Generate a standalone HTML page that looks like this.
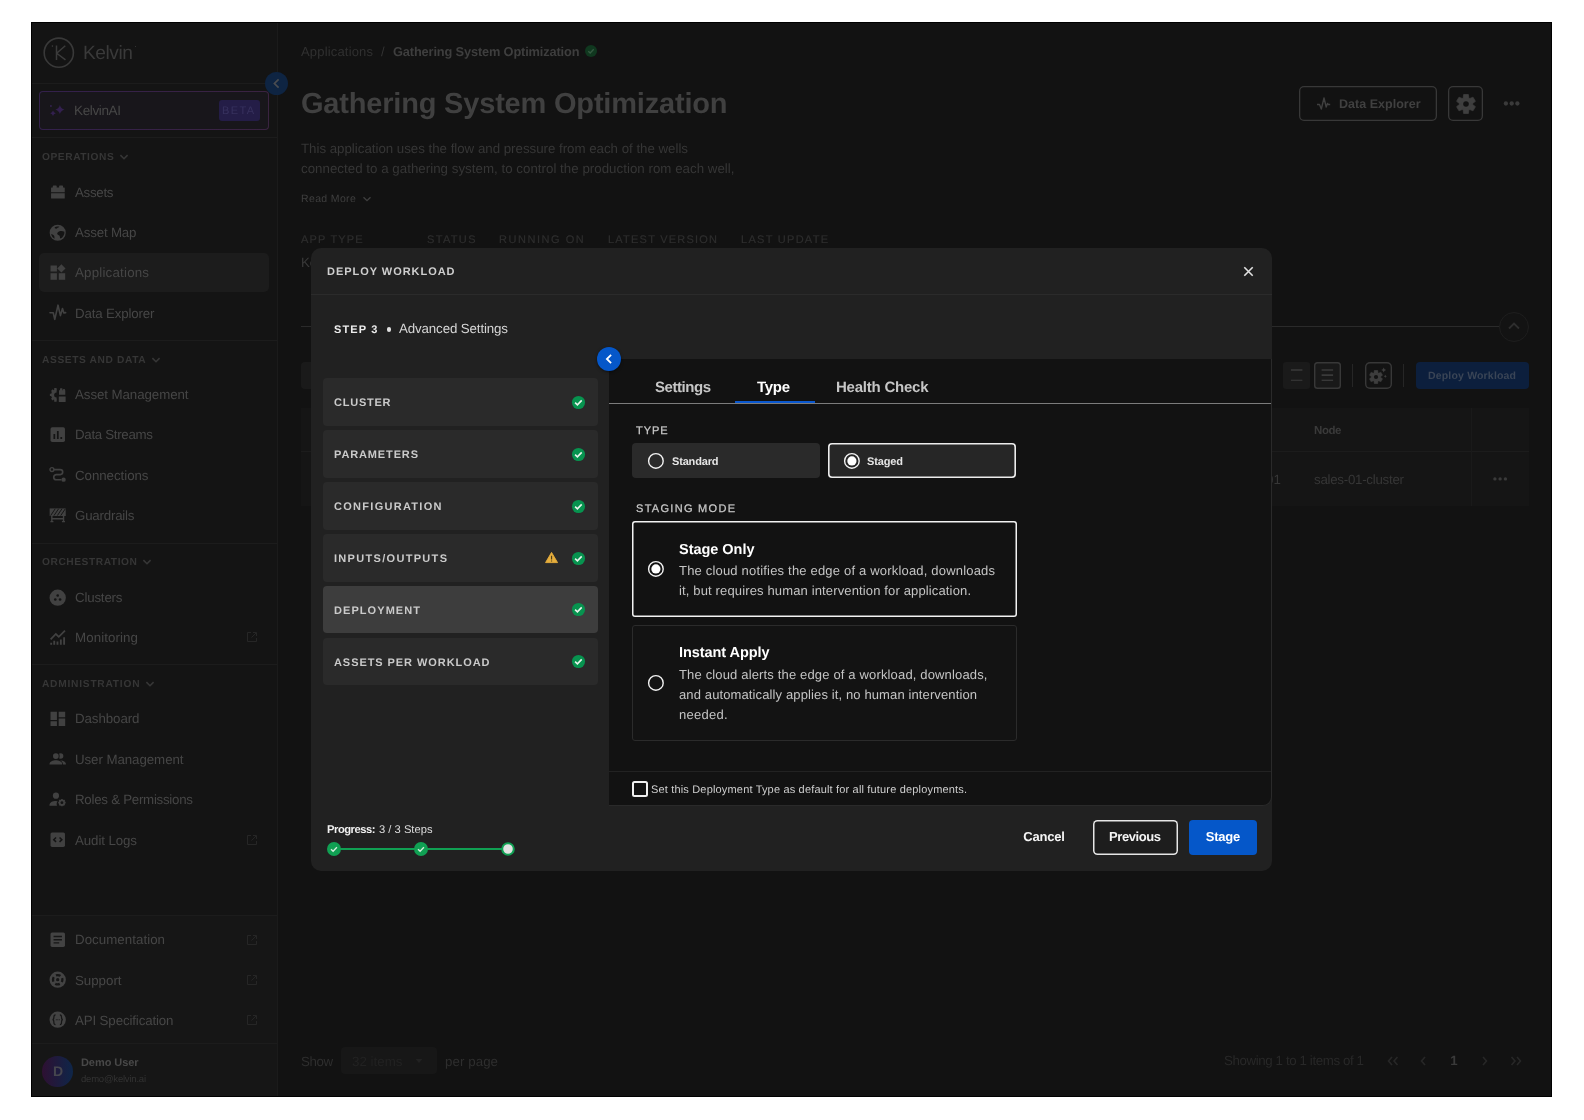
<!DOCTYPE html><html><head><meta charset="utf-8"><title>Kelvin</title><style>
html,body{margin:0;padding:0;}
html{width:1584px;height:1120px;overflow:hidden;}
body{width:1584px;height:1120px;background:#fff;position:relative;overflow:hidden;font-family:"Liberation Sans",sans-serif;}
.a{position:absolute;box-sizing:border-box;}
.t{white-space:nowrap;will-change:transform;text-rendering:geometricPrecision;}
</style></head><body>
<div class="a" style="left:31px;top:22px;width:1521px;height:1075px;background:#121212;border:1px solid #000;"></div>
<div class="a" style="left:32px;top:23px;width:246px;height:1073px;background:#141414;"></div>
<div class="a" style="left:277px;top:23px;width:1px;height:1073px;background:#1b1b1b;"></div>
<div class="a" style="left:32px;top:915px;width:245px;height:181px;background:#161616;"></div>
<div class="a" style="left:32px;top:83px;width:245px;height:1px;background:#1c1c1c;"></div>
<div class="a" style="left:32px;top:137px;width:245px;height:1px;background:#1c1c1c;"></div>
<div class="a" style="left:32px;top:340px;width:245px;height:1px;background:#1c1c1c;"></div>
<div class="a" style="left:32px;top:543px;width:245px;height:1px;background:#1c1c1c;"></div>
<div class="a" style="left:32px;top:664px;width:245px;height:1px;background:#1c1c1c;"></div>
<div class="a" style="left:32px;top:915px;width:245px;height:1px;background:#1c1c1c;"></div>
<div class="a" style="left:32px;top:1043px;width:245px;height:1px;background:#1c1c1c;"></div>
<svg class="a" style="left:43px;top:37px;" width="32" height="32" viewBox="0 0 32 32"><circle cx="15.800" cy="15.700" r="14.600" fill="none" stroke="#393939" stroke-width="1.600"/><path d="M13.500 8.500v14.500M22.300 8.700l-8.600 7.600 8.800 6.600" fill="none" stroke="#3b3b3b" stroke-width="1.500"/><circle cx="9.400" cy="9.100" r="0.800" fill="#3b3b3b"/></svg>
<div class="a t" style="top:39.9px;font-size:19.2px;line-height:27px;color:#3a3a3a;letter-spacing:-0.453px;left:82.8px;">Kelvin</div>
<div class="a" style="left:134.5px;top:45.5px;width:1.6px;height:1.6px;background:#3c3c3c;border-radius:1px;"></div>
<div class="a" style="left:265.4px;top:72px;width:23px;height:23px;background:#0e2442;border-radius:12px;"></div>
<svg class="a" style="left:265.4px;top:72px;" width="23" height="23" viewBox="0 0 23 23"><path d="M13.600 7.300L9.400 11.500l4.200 4.200" fill="none" stroke="#4a4c50" stroke-width="1.700"/></svg>
<div class="a" style="left:39px;top:91px;width:230px;height:39px;background:linear-gradient(#18161b,#18161b) padding-box,linear-gradient(90deg,#33204c,#3a2341) border-box;border:1.300px solid transparent;border-radius:4px;"></div>
<svg class="a" style="left:48px;top:103px;" width="18" height="16" viewBox="0 0 18 16"><path d="M11.9 1.9000000000000004Q12.91 5.49 16.5 6.5Q12.91 7.51 11.9 11.1Q10.89 7.51 7.300000000000001 6.5Q10.89 5.49 11.9 1.9000000000000004Z" fill="#33204f"/><path d="M5 7.500000000000001Q5.62 9.68 7.8 10.3Q5.62 10.92 5 13.100000000000001Q4.38 10.92 2.2 10.3Q4.38 9.68 5 7.500000000000001Z" fill="#33204f"/><circle cx="2.900" cy="3" r="0.950" fill="#33204f"/></svg>
<div class="a t" style="top:101.2px;font-size:13.5px;line-height:19px;color:#474747;letter-spacing:-0.362px;left:74.3px;">KelvinAI</div>
<div class="a" style="left:219px;top:99.5px;width:41px;height:21.5px;background:#241d47;border-radius:3px;"></div>
<div class="a t" style="top:103.7px;font-size:11px;line-height:15px;color:#37315e;letter-spacing:1.359px;left:163.4px;width:150px;text-align:center;text-indent:1.359px;">BETA</div>
<div class="a t" style="top:150.8px;font-size:10.2px;line-height:14px;color:#363636;font-weight:700;letter-spacing:0.566px;left:42.4px;">OPERATIONS</div>
<svg class="a" style="left:119.19999999999999px;top:153.3px;" width="10" height="8" viewBox="0 0 10 8"><path d="M1.400 2.100L5 5.700l3.600-3.600" fill="none" stroke="#363636" stroke-width="1.600"/></svg>
<div class="a t" style="top:353.5px;font-size:10.2px;line-height:14px;color:#363636;font-weight:700;letter-spacing:0.621px;left:42.4px;">ASSETS AND DATA</div>
<svg class="a" style="left:151.1px;top:356.0px;" width="10" height="8" viewBox="0 0 10 8"><path d="M1.400 2.100L5 5.700l3.600-3.600" fill="none" stroke="#363636" stroke-width="1.600"/></svg>
<div class="a t" style="top:555.8px;font-size:10.2px;line-height:14px;color:#363636;font-weight:700;letter-spacing:0.566px;left:42.4px;">ORCHESTRATION</div>
<svg class="a" style="left:142.4px;top:558.3px;" width="10" height="8" viewBox="0 0 10 8"><path d="M1.400 2.100L5 5.700l3.600-3.600" fill="none" stroke="#363636" stroke-width="1.600"/></svg>
<div class="a t" style="top:677.8px;font-size:10.2px;line-height:14px;color:#363636;font-weight:700;letter-spacing:0.767px;left:42.4px;">ADMINISTRATION</div>
<svg class="a" style="left:145.0px;top:680.3px;" width="10" height="8" viewBox="0 0 10 8"><path d="M1.400 2.100L5 5.700l3.600-3.600" fill="none" stroke="#363636" stroke-width="1.600"/></svg>
<div class="a" style="left:39px;top:253px;width:230px;height:39px;background:#1c1c1c;border-radius:5px;"></div>
<div class="a t" style="top:182.8px;font-size:13.3px;line-height:19px;color:#464646;letter-spacing:-0.281px;left:75px;">Assets</div>
<div class="a t" style="top:223px;font-size:13.3px;line-height:19px;color:#464646;letter-spacing:-0.166px;left:75px;">Asset Map</div>
<div class="a t" style="top:263.3px;font-size:13.3px;line-height:19px;color:#464646;letter-spacing:0.209px;left:75px;">Applications</div>
<div class="a t" style="top:303.6px;font-size:13.3px;line-height:19px;color:#464646;letter-spacing:-0.150px;left:75px;">Data Explorer</div>
<div class="a t" style="top:384.9px;font-size:13.3px;line-height:19px;color:#464646;letter-spacing:-0.071px;left:75px;">Asset Management</div>
<div class="a t" style="top:425.3px;font-size:13.3px;line-height:19px;color:#464646;letter-spacing:-0.300px;left:75px;">Data Streams</div>
<div class="a t" style="top:465.8px;font-size:13.3px;line-height:19px;color:#464646;letter-spacing:-0.042px;left:75px;">Connections</div>
<div class="a t" style="top:506px;font-size:13.3px;line-height:19px;color:#464646;letter-spacing:-0.205px;left:75px;">Guardrails</div>
<div class="a t" style="top:587.8px;font-size:13.3px;line-height:19px;color:#464646;letter-spacing:-0.183px;left:75px;">Clusters</div>
<div class="a t" style="top:628px;font-size:13.3px;line-height:19px;color:#464646;letter-spacing:0.101px;left:75px;">Monitoring</div>
<svg class="a" style="left:245.7px;top:631.4000000000001px;" width="12" height="12" viewBox="0 0 12 12"><path d="M5 1.500H1.500v9h9V7M7 1.500h3.500V5M10.300 1.700L5.500 6.500" fill="none" stroke="#262626" stroke-width="1"/></svg>
<div class="a t" style="top:709.3px;font-size:13.3px;line-height:19px;color:#464646;letter-spacing:-0.070px;left:75px;">Dashboard</div>
<div class="a t" style="top:749.5px;font-size:13.3px;line-height:19px;color:#464646;letter-spacing:-0.064px;left:75px;">User Management</div>
<div class="a t" style="top:790.2px;font-size:13.3px;line-height:19px;color:#464646;letter-spacing:-0.260px;left:75px;">Roles &amp; Permissions</div>
<div class="a t" style="top:830.5px;font-size:13.3px;line-height:19px;color:#464646;letter-spacing:-0.094px;left:75px;">Audit Logs</div>
<svg class="a" style="left:245.7px;top:833.9000000000001px;" width="12" height="12" viewBox="0 0 12 12"><path d="M5 1.500H1.500v9h9V7M7 1.500h3.500V5M10.300 1.700L5.500 6.500" fill="none" stroke="#262626" stroke-width="1"/></svg>
<div class="a t" style="top:930.3px;font-size:13.3px;line-height:19px;color:#464646;letter-spacing:0.047px;left:75px;">Documentation</div>
<svg class="a" style="left:245.7px;top:933.7px;" width="12" height="12" viewBox="0 0 12 12"><path d="M5 1.500H1.500v9h9V7M7 1.500h3.500V5M10.300 1.700L5.500 6.500" fill="none" stroke="#262626" stroke-width="1"/></svg>
<div class="a t" style="top:970.5px;font-size:13.3px;line-height:19px;color:#464646;letter-spacing:-0.013px;left:75px;">Support</div>
<svg class="a" style="left:245.7px;top:973.9000000000001px;" width="12" height="12" viewBox="0 0 12 12"><path d="M5 1.500H1.500v9h9V7M7 1.500h3.500V5M10.300 1.700L5.500 6.500" fill="none" stroke="#262626" stroke-width="1"/></svg>
<div class="a t" style="top:1010.7px;font-size:13.3px;line-height:19px;color:#464646;letter-spacing:-0.127px;left:75px;">API Specification</div>
<svg class="a" style="left:245.7px;top:1014.1px;" width="12" height="12" viewBox="0 0 12 12"><path d="M5 1.500H1.500v9h9V7M7 1.500h3.500V5M10.300 1.700L5.500 6.500" fill="none" stroke="#262626" stroke-width="1"/></svg>
<svg class="a" style="left:49.2px;top:183.2px;" width="17.4" height="17.4" viewBox="0 0 16 16"><path d="M1.900 4.600a.5.5 0 0 1 .5-.5H3.500V3a.6.6 0 0 1 .6-.6h2.400a.6.6 0 0 1 .6.6v1.100h2.200V3a.6.6 0 0 1 .6-.6h2.400a.6.6 0 0 1 .6.6v1.100h1.100a.5.5 0 0 1 .5.5v4H1.900zM1.900 9.500h12.600v4.200a.6.6 0 0 1-.6.6H2.500a.6.6 0 0 1-.6-.6z" fill="#414141"/></svg>
<svg class="a" style="left:49.2px;top:223.7px;" width="17.4" height="17.4" viewBox="0 0 16 16"><circle cx="8" cy="8" r="7.400" fill="#414141"/><path d="M5.200 2.900c1.300-.800 3.300-.900 4.300-.300-.300.900-1.500.700-2 1.400-.400.600-1.500.400-2.100-.100zM9.700 6.700c1.200-.700 3.300-.300 4.500.400.200 2.800-1.300 5.200-3.600 6.200-.800-.600-.300-1.700-.900-2.500-.600-.700-1.700-.600-2.100-1.500-.400-1 .800-2 2.100-2.600zM2 9.200c1 .200 2.300.800 2.800 1.800.400.900 0 1.800.600 2.600C3.600 12.800 2.300 11.200 2 9.200z" fill="#141414"/></svg>
<svg class="a" style="left:49.2px;top:264.0px;" width="17.4" height="17.4" viewBox="0 0 16 16"><path d="M1.400 1.300h5.900v5.700H1.400zM1.400 8.600h5.900v5.900H1.400zM9 8.600h5.900v5.900H9zM11.400 0.250l3.800 3.800-3.800 3.800-3.800-3.800z" fill="#414141"/></svg>
<svg class="a" style="left:49.2px;top:304.3px;" width="17.4" height="17.4" viewBox="0 0 16 16"><path d="M0.900 8.100h3l1.400 6 3-13 2.200 9.600 1.900-6.500 1.300 4.100 1.600-.4" fill="none" stroke="#414141" stroke-width="1.500" stroke-linejoin="round" stroke-linecap="round"/></svg>
<svg class="a" style="left:49.2px;top:385.6px;" width="17.4" height="17.4" viewBox="0 0 16 16"><path d="M7.0 3.0999999999999996A5.100 5.100 0 0 0 7.0 13.299999999999999V10.5A2.300 2.300 0 0 1 7.0 5.8999999999999995Z" fill="#414141"/><path d="M5.90 4.20L5.90 1.80M4.17 5.37L2.62 3.82M3.00 8.20L0.80 8.20M4.17 11.03L2.62 12.58M5.90 12.20L5.90 14.60" stroke="#414141" stroke-width="2.200" fill="none"/><path d="M9.200 4h.9V2.600a.5.5 0 0 1 .5-.5h1.300a.5.5 0 0 1 .5.5V4h.5V3.300a.5.5 0 0 1 .5-.5h.8a.5.5 0 0 1 .5.5V4h.3v4H9.200zM9 9.700h6.300v4.500a.6.6 0 0 1-.6.600H9.600a.6.600 0 0 1-.600-.600z" fill="#414141"/></svg>
<svg class="a" style="left:49.2px;top:426.0px;" width="17.4" height="17.4" viewBox="0 0 16 16"><rect x="1.400" y="1.200" width="13.300" height="13.600" rx="1.600" fill="#414141"/><path d="M4.900 7.300v4.600M8.100 4.600v7.300M11.300 10.100v1.800" stroke="#141414" stroke-width="1.600" fill="none"/></svg>
<svg class="a" style="left:49.2px;top:466.3px;" width="17.4" height="17.4" viewBox="0 0 16 16"><circle cx="2.700" cy="3.300" r="1.800" fill="none" stroke="#414141" stroke-width="1.300"/><circle cx="13.400" cy="12.600" r="2" fill="#414141"/><path d="M4.500 3.300h5.800a2.300 2.300 0 0 1 0 4.600H6.700a2.350 2.350 0 0 0 0 4.700h4.700" fill="none" stroke="#414141" stroke-width="1.500"/></svg>
<svg class="a" style="left:49.2px;top:506.0px;" width="17.4" height="17.4" viewBox="0 0 16 16"><path d="M0.600 2.200h14.800v7H0.600z" fill="#414141"/><path d="M2.600 9.200v5.400M13.400 9.200v5.400M1.300 14.400h2.800M11.900 14.400h2.800M2.600 11.800h10.800" fill="none" stroke="#414141" stroke-width="1.300"/><path d="M1.500 8.800l4.200-6.200M4.600 8.800l4.200-6.200M7.700 8.800l4.200-6.200M10.800 8.800l4.200-6.200" stroke="#141414" stroke-width="0.900"/></svg>
<svg class="a" style="left:49.2px;top:588.5px;" width="17.4" height="17.4" viewBox="0 0 16 16"><circle cx="8" cy="8" r="7.500" fill="#414141"/><circle cx="8" cy="6" r="1.200" fill="#141414"/><circle cx="5.800" cy="9.600" r="1.200" fill="#141414"/><circle cx="10.200" cy="9.600" r="1.200" fill="#141414"/></svg>
<svg class="a" style="left:49.2px;top:628.7px;" width="17.4" height="17.4" viewBox="0 0 16 16"><path d="M1.500 9.600L6.300 4.600l2.700 2.600 5.700-5.800" fill="none" stroke="#414141" stroke-width="1.600"/><path d="M2 12.700v1.700M4.800 10.800v3.600M7.800 11.600v2.800M10.900 9.700v4.700M13.900 7.600v6.800" fill="none" stroke="#414141" stroke-width="1.700"/></svg>
<svg class="a" style="left:49.2px;top:710.0px;" width="17.4" height="17.4" viewBox="0 0 16 16"><path d="M1.400 1.500h5.900v7.600H1.400zM8.900 1.500h6v5.100h-6zM8.900 7.800h6v7h-6zM1.400 10.400h5.900v4.400H1.400z" fill="#414141"/></svg>
<svg class="a" style="left:49.2px;top:750.2px;" width="17.4" height="17.4" viewBox="0 0 16 16"><circle cx="10.700" cy="5.600" r="2.500" fill="#414141"/><path d="M9 13.300c0-2 .5-3.200 1.800-3.700 2.700 0 4.800 1.300 4.800 3.700z" fill="#414141"/><circle cx="6.300" cy="5.600" r="3.500" fill="#141414"/><path d="M-.4 14c0-4 3.400-5.300 6.700-5.300s6.700 1.300 6.700 5.300z" fill="#141414"/><circle cx="6.300" cy="5.600" r="2.650" fill="#414141"/><path d="M0.400 13.300c0-2.800 3-3.900 5.900-3.900s5.900 1.100 5.900 3.900z" fill="#414141"/></svg>
<svg class="a" style="left:49.2px;top:790.9px;" width="17.4" height="17.4" viewBox="0 0 16 16"><circle cx="6.400" cy="4.300" r="2.850" fill="#414141"/><path d="M0.400 13.500c0-3 2.800-4.200 6-4.200l1.500.100c-1 1.200-1.100 2.800-.500 4.100z" fill="#414141"/><path d="M13.70 10.70L15.30 10.70M13.17 11.97L14.30 13.10M11.90 12.50L11.90 14.10M10.63 11.97L9.50 13.10M10.10 10.70L8.50 10.70M10.63 9.43L9.50 8.30M11.90 8.90L11.90 7.30M13.17 9.43L14.30 8.30" stroke="#414141" stroke-width="1.400" fill="none"/><circle cx="11.9" cy="10.7" r="2.100" fill="none" stroke="#414141" stroke-width="1.500"/></svg>
<svg class="a" style="left:49.2px;top:831.2px;" width="17.4" height="17.4" viewBox="0 0 16 16"><rect x="1.400" y="1.300" width="13.300" height="13.400" rx="1.500" fill="#414141"/><path d="M6.500 6L4.400 8l2.100 2M9.700 6l2.100 2-2.100 2" stroke="#141414" stroke-width="1.400" fill="none"/></svg>
<svg class="a" style="left:49.2px;top:931.0px;" width="17.4" height="17.4" viewBox="0 0 16 16"><rect x="1.400" y="1.300" width="13.300" height="13.400" rx="1.500" fill="#434343"/><path d="M4.200 5.100h7.700M4.200 8h7.700M4.200 10.900h5.200" stroke="#161616" stroke-width="1.300" fill="none"/></svg>
<svg class="a" style="left:49.2px;top:971.2px;" width="17.4" height="17.4" viewBox="0 0 16 16"><circle cx="8" cy="8" r="7.500" fill="#434343"/><circle cx="8" cy="8" r="4.300" fill="none" stroke="#161616" stroke-width="2.100" stroke-dasharray="4.350 2.404" stroke-dashoffset="2.175"/><circle cx="8" cy="8" r="1.500" fill="#161616"/></svg>
<svg class="a" style="left:49.2px;top:1011.4px;" width="17.4" height="17.4" viewBox="0 0 16 16"><circle cx="8" cy="8" r="7.500" fill="#434343"/><path d="M6 3.500c-1.500 0-1.500 1-1.500 2s0 2.500-1.300 2.500c1.300 0 1.300 1.500 1.300 2.500s0 2 1.500 2M10 3.500c1.500 0 1.500 1 1.500 2s0 2.500 1.300 2.500c-1.300 0-1.300 1.500-1.300 2.500s0 2-1.500 2" stroke="#161616" stroke-width="1.100" fill="none"/><path d="M6.300 8h.8M7.700 8h.8M9.100 8h.8" stroke="#161616" stroke-width="1"/></svg>
<div class="a" style="left:42px;top:1055.5px;width:31px;height:31px;background:linear-gradient(90deg,#2e1032,#0e2649);border-radius:16px;"></div>
<div class="a t" style="top:1061.3px;font-size:14px;line-height:20px;color:#46464e;font-weight:700;left:-17.5px;width:150px;text-align:center;">D</div>
<div class="a t" style="top:1055.9px;font-size:11px;line-height:15px;color:#484848;font-weight:700;letter-spacing:-0.072px;left:81px;">Demo User</div>
<div class="a t" style="top:1072.8px;font-size:9.5px;line-height:13px;color:#333;letter-spacing:-0.210px;left:81px;">demo@kelvin.ai</div>
<div class="a t" style="top:42.6px;font-size:13px;line-height:18px;color:#303030;letter-spacing:0.172px;left:301px;">Applications</div>
<div class="a t" style="top:42.6px;font-size:13px;line-height:18px;color:#333;left:381px;">/</div>
<div class="a t" style="top:42.6px;font-size:12.8px;line-height:18px;color:#3e3e3e;font-weight:700;letter-spacing:-0.145px;left:392.5px;">Gathering System Optimization</div>
<svg class="a" style="left:584.5px;top:45.2px;" width="12" height="12" viewBox="0 0 12 12"><circle cx="6" cy="6" r="6" fill="#10381f"/><path d="M3.300 6.200l1.900 1.800 3.500-3.700" fill="none" stroke="#355a42" stroke-width="1.300"/></svg>
<div class="a t" style="top:83.9px;font-size:29px;line-height:41px;color:#404040;font-weight:700;letter-spacing:-0.191px;left:301px;">Gathering System Optimization</div>
<div class="a t" style="top:138.7px;font-size:13.3px;line-height:19px;color:#363636;letter-spacing:-0.016px;left:301px;">This application uses the flow and pressure from each of the wells</div>
<div class="a t" style="top:158.9px;font-size:13.3px;line-height:19px;color:#363636;letter-spacing:0.026px;left:301px;">connected to a gathering system, to control the production rom each well,</div>
<div class="a t" style="top:192.1px;font-size:10.5px;line-height:15px;color:#3f3f3f;letter-spacing:0.356px;left:301px;">Read More</div>
<svg class="a" style="left:362px;top:195px;" width="10" height="8" viewBox="0 0 10 8"><path d="M1.500 2.200L5 5.700l3.500-3.500" fill="none" stroke="#3f3f3f" stroke-width="1.300"/></svg>
<div class="a t" style="top:232.6px;font-size:11px;line-height:15px;color:#2e2e2e;letter-spacing:1.185px;left:301px;-webkit-text-stroke:0.200px #2e2e2e;">APP TYPE</div>
<div class="a t" style="top:232.6px;font-size:11px;line-height:15px;color:#2e2e2e;letter-spacing:1.347px;left:427px;-webkit-text-stroke:0.200px #2e2e2e;">STATUS</div>
<div class="a t" style="top:232.6px;font-size:11px;line-height:15px;color:#2e2e2e;letter-spacing:1.545px;left:499px;-webkit-text-stroke:0.200px #2e2e2e;">RUNNING ON</div>
<div class="a t" style="top:232.6px;font-size:11px;line-height:15px;color:#2e2e2e;letter-spacing:1.221px;left:608.4px;-webkit-text-stroke:0.200px #2e2e2e;">LATEST VERSION</div>
<div class="a t" style="top:232.6px;font-size:11px;line-height:15px;color:#2e2e2e;letter-spacing:1.283px;left:741px;-webkit-text-stroke:0.200px #2e2e2e;">LAST UPDATE</div>
<div class="a t" style="top:252.5px;font-size:13.3px;line-height:19px;color:#3a3a3a;left:301px;">Ke</div>
<div class="a" style="left:1299px;top:86px;width:138px;height:35px;border-radius:5px;box-shadow:inset 0 0 0 1.300px #383838;"></div>
<svg class="a" style="left:1316px;top:96px;" width="16" height="16" viewBox="0 0 16 16"><path d="M1 8.500h2.500l1.800 4.500 2.700-11 2.200 9 1.300-3.500.900 1h1.800" fill="none" stroke="#404040" stroke-width="1.400" stroke-linejoin="round"/></svg>
<div class="a t" style="top:95px;font-size:12.5px;line-height:18px;color:#404040;font-weight:700;letter-spacing:0.018px;left:1339px;">Data Explorer</div>
<div class="a" style="left:1448px;top:86px;width:35px;height:35px;border-radius:5px;box-shadow:inset 0 0 0 1.300px #383838;"></div>
<svg class="a" style="left:1455.7px;top:93.5px;" width="20" height="20" viewBox="0 0 20 20"><circle cx="10" cy="10" r="6.5" fill="#3f3f3f"/><path d="M6.90 5.45 L7.60 0.50 L12.40 0.50 L13.10 5.45Z" fill="#3f3f3f" stroke="#3f3f3f" stroke-width="0.700" stroke-linejoin="round"/><path d="M4.51 10.41 L0.57 7.33 L2.97 3.17 L7.61 5.04Z" fill="#3f3f3f" stroke="#3f3f3f" stroke-width="0.700" stroke-linejoin="round"/><path d="M7.61 14.96 L2.97 16.83 L0.57 12.67 L4.51 9.59Z" fill="#3f3f3f" stroke="#3f3f3f" stroke-width="0.700" stroke-linejoin="round"/><path d="M13.10 14.55 L12.40 19.50 L7.60 19.50 L6.90 14.55Z" fill="#3f3f3f" stroke="#3f3f3f" stroke-width="0.700" stroke-linejoin="round"/><path d="M15.49 9.59 L19.43 12.67 L17.03 16.83 L12.39 14.96Z" fill="#3f3f3f" stroke="#3f3f3f" stroke-width="0.700" stroke-linejoin="round"/><path d="M12.39 5.04 L17.03 3.17 L19.43 7.33 L15.49 10.41Z" fill="#3f3f3f" stroke="#3f3f3f" stroke-width="0.700" stroke-linejoin="round"/><circle cx="10" cy="10" r="2.8" fill="#121212"/></svg>
<svg class="a" style="left:1500px;top:98px;" width="24" height="12" viewBox="0 0 24 12"><circle cx="5.900" cy="5.500" r="2.150" fill="#3a3a3a"/><circle cx="11.700" cy="5.500" r="2.150" fill="#3a3a3a"/><circle cx="17.400" cy="5.500" r="2.150" fill="#3a3a3a"/></svg>
<div class="a" style="left:301px;top:326px;width:1198px;height:1px;background:#2a2a2a;"></div>
<div class="a" style="left:1498.7px;top:311.7px;width:30px;height:30px;background:#131313;border:1px solid #1e1e1e;border-radius:15px;"></div>
<svg class="a" style="left:1506.7px;top:321.2px;" width="14" height="10" viewBox="0 0 14 10"><path d="M2 7.500l5-5 5 5" fill="none" stroke="#2e2e2e" stroke-width="1.800"/></svg>
<div class="a" style="left:301px;top:362px;width:200px;height:27px;background:#1a1a1a;border-radius:4px;"></div>
<div class="a" style="left:1283px;top:362px;width:27px;height:27px;background:#1a1a1a;border-radius:3px;"></div>
<svg class="a" style="left:1283px;top:362px;" width="27" height="27" viewBox="0 0 27 27"><path d="M7.900 8h11.500" stroke="#363636" stroke-width="1.700"/><path d="M7.900 18.300h11.500" stroke="#363636" stroke-width="1.200"/></svg>
<div class="a" style="left:1314px;top:362px;width:27px;height:27px;background:#191919;border-radius:3.5px;box-shadow:inset 0 0 0 1.400px #383838;"></div>
<svg class="a" style="left:1314px;top:362px;" width="27" height="27" viewBox="0 0 27 27"><path d="M7.600 8h11.500M7.600 13.200h11.500" stroke="#3a3a3a" stroke-width="1.700"/><path d="M7.600 18.300h11.500" stroke="#3a3a3a" stroke-width="1.300"/></svg>
<div class="a" style="left:1352px;top:364px;width:1px;height:23px;background:#262626;"></div>
<div class="a" style="left:1364.5px;top:362px;width:27px;height:27px;background:#131313;border-radius:5px;box-shadow:inset 0 0 0 1.400px #383838;"></div>
<svg class="a" style="left:1369.4px;top:369.8px;" width="14" height="14" viewBox="0 0 20 20"><circle cx="10" cy="10" r="6.5" fill="#3e3e3e"/><path d="M6.90 5.45 L7.60 0.50 L12.40 0.50 L13.10 5.45Z" fill="#3e3e3e" stroke="#3e3e3e" stroke-width="0.700" stroke-linejoin="round"/><path d="M4.51 10.41 L0.57 7.33 L2.97 3.17 L7.61 5.04Z" fill="#3e3e3e" stroke="#3e3e3e" stroke-width="0.700" stroke-linejoin="round"/><path d="M7.61 14.96 L2.97 16.83 L0.57 12.67 L4.51 9.59Z" fill="#3e3e3e" stroke="#3e3e3e" stroke-width="0.700" stroke-linejoin="round"/><path d="M13.10 14.55 L12.40 19.50 L7.60 19.50 L6.90 14.55Z" fill="#3e3e3e" stroke="#3e3e3e" stroke-width="0.700" stroke-linejoin="round"/><path d="M15.49 9.59 L19.43 12.67 L17.03 16.83 L12.39 14.96Z" fill="#3e3e3e" stroke="#3e3e3e" stroke-width="0.700" stroke-linejoin="round"/><path d="M12.39 5.04 L17.03 3.17 L19.43 7.33 L15.49 10.41Z" fill="#3e3e3e" stroke="#3e3e3e" stroke-width="0.700" stroke-linejoin="round"/><circle cx="10" cy="10" r="3" fill="#131313"/></svg>
<svg class="a" style="left:1378px;top:364px;" width="12" height="16" viewBox="0 0 12 16"><path d="M5.7 3.5Q6.15 5.55 8.2 6Q6.15 6.45 5.7 8.5Q5.25 6.45 3.2 6Q5.25 5.55 5.7 3.5Z" fill="#3e3e3e"/><path d="M7.3 10.700000000000001Q7.59 12.01 8.9 12.3Q7.59 12.59 7.3 13.9Q7.01 12.59 5.699999999999999 12.3Q7.01 12.01 7.3 10.700000000000001Z" fill="#3e3e3e"/></svg>
<div class="a" style="left:1403px;top:364px;width:1px;height:23px;background:#262626;"></div>
<div class="a" style="left:1415.5px;top:362px;width:113.5px;height:27px;background:#0c1f3d;border-radius:4px;"></div>
<div class="a t" style="top:368.8px;font-size:10.5px;line-height:15px;color:#3a4556;font-weight:700;letter-spacing:0.173px;left:1397.3px;width:150px;text-align:center;text-indent:0.173px;">Deploy Workload</div>
<div class="a" style="left:301px;top:408px;width:1228px;height:97.5px;background:#151515;"></div>
<div class="a" style="left:301px;top:451px;width:1228px;height:1px;background:#1c1c1c;"></div>
<div class="a" style="left:1471px;top:408px;width:1px;height:97.5px;background:#1a1a1a;"></div>
<div class="a t" style="top:423.2px;font-size:11.5px;line-height:16px;color:#3a3a3a;font-weight:700;letter-spacing:-0.417px;left:1314px;">Node</div>
<div class="a t" style="top:469.8px;font-size:13.3px;line-height:19px;color:#363636;letter-spacing:-0.257px;left:1314px;">sales-01-cluster</div>
<div class="a t" style="top:469.8px;font-size:13.3px;line-height:19px;color:#363636;left:1266px;">01</div>
<svg class="a" style="left:1490px;top:474px;" width="24" height="10" viewBox="0 0 24 10"><circle cx="4.900" cy="4.900" r="1.700" fill="#3a3a3a"/><circle cx="10.100" cy="4.900" r="1.700" fill="#3a3a3a"/><circle cx="15.400" cy="4.900" r="1.700" fill="#3a3a3a"/></svg>
<div class="a t" style="top:1051.6px;font-size:13.3px;line-height:19px;color:#2e2e2e;letter-spacing:-0.422px;left:301px;">Show</div>
<div class="a" style="left:341px;top:1047px;width:96px;height:26.5px;background:#171717;border-radius:4px;"></div>
<div class="a t" style="top:1051.6px;font-size:13.3px;line-height:19px;color:#222;letter-spacing:0.033px;left:351.5px;">32 items</div>
<svg class="a" style="left:415px;top:1058px;" width="8" height="6" viewBox="0 0 8 6"><path d="M0.500 1h7L4 5z" fill="#222"/></svg>
<div class="a t" style="top:1051.6px;font-size:13.3px;line-height:19px;color:#2e2e2e;letter-spacing:0.071px;left:445px;">per page</div>
<div class="a t" style="top:1051.2px;font-size:13.3px;line-height:19px;color:#282828;letter-spacing:-0.388px;left:1224px;">Showing 1 to 1 items of 1</div>
<svg class="a" style="left:1386px;top:1055px;" width="14" height="12" viewBox="0 0 14 12"><path d="M6 2L2.500 6 6 10M11.500 2L8 6l3.500 4" fill="none" stroke="#272727" stroke-width="1.600"/></svg>
<svg class="a" style="left:1418px;top:1055px;" width="10" height="12" viewBox="0 0 10 12"><path d="M7 2L3.500 6 7 10" fill="none" stroke="#272727" stroke-width="1.600"/></svg>
<div class="a t" style="top:1051.2px;font-size:13.3px;line-height:19px;color:#3a3a3a;font-weight:700;left:1379px;width:150px;text-align:center;">1</div>
<svg class="a" style="left:1480px;top:1055px;" width="10" height="12" viewBox="0 0 10 12"><path d="M3 2l3.500 4L3 10" fill="none" stroke="#272727" stroke-width="1.600"/></svg>
<svg class="a" style="left:1508.5px;top:1055px;" width="14" height="12" viewBox="0 0 14 12"><path d="M2.500 2L6 6l-3.500 4M8 2l3.500 4L8 10" fill="none" stroke="#272727" stroke-width="1.600"/></svg>
<div class="a" style="left:311.2px;top:247.6px;width:960.8px;height:623.6px;background:#212121;border-radius:10px;"></div>
<div class="a" style="left:311.2px;top:294px;width:960.8px;height:1px;background:#2b2b2b;"></div>
<div class="a t" style="top:265.3px;font-size:11px;line-height:15px;color:#cfcfcf;font-weight:700;letter-spacing:0.959px;left:327px;">DEPLOY WORKLOAD</div>
<svg class="a" style="left:1243px;top:266px;" width="11" height="11" viewBox="0 0 11 11"><path d="M1.300 1.300l8.400 8.400M9.700 1.300L1.300 9.700" stroke="#e2e2e2" stroke-width="1.600" fill="none"/></svg>
<div class="a t" style="top:322.5px;font-size:11px;line-height:15px;color:#ececec;font-weight:700;letter-spacing:1.156px;left:333.8px;">STEP 3</div>
<div class="a" style="left:386.6px;top:327.2px;width:4.6px;height:4.6px;background:#e0e0e0;border-radius:3px;"></div>
<div class="a t" style="top:319.2px;font-size:13.3px;line-height:19px;color:#d6d6d6;letter-spacing:-0.118px;left:399px;">Advanced Settings</div>
<div class="a" style="left:609px;top:359px;width:663px;height:446.8px;background:#121212;border:1px solid #2a2a2a;border-radius:0 0 9px 0;border-left:none;border-top:none;"></div>
<div class="a" style="left:609px;top:403px;width:662px;height:1px;background:#7c7c7c;"></div>
<div class="a" style="left:734.8px;top:401px;width:80px;height:2px;background:#0a58cf;"></div>
<div class="a t" style="top:377px;font-size:15px;line-height:21px;color:#c6c6c6;font-weight:700;letter-spacing:-0.455px;left:655px;">Settings</div>
<div class="a t" style="top:377px;font-size:15px;line-height:21px;color:#ffffff;font-weight:700;letter-spacing:-0.302px;left:756.9px;">Type</div>
<div class="a t" style="top:377px;font-size:15px;line-height:21px;color:#c6c6c6;font-weight:700;letter-spacing:-0.232px;left:835.9px;">Health Check</div>
<div class="a" style="left:597px;top:347px;width:24px;height:24px;background:#0557c9;border-radius:12px;box-shadow:0 1px 3px rgba(0,0,0,.5);"></div>
<svg class="a" style="left:597px;top:347px;" width="24" height="24" viewBox="0 0 24 24"><path d="M14.100 7.900L9.900 12l4.200 4.100" fill="none" stroke="#fff" stroke-width="1.800"/></svg>
<div class="a" style="left:322.5px;top:378.3px;width:275px;height:47.5px;background:#2a2a2a;border-radius:4px;"></div>
<div class="a t" style="top:396px;font-size:11px;line-height:15px;color:#cacaca;font-weight:700;letter-spacing:0.758px;left:334px;">CLUSTER</div>
<svg class="a" style="left:571.7px;top:395.8px;overflow:visible;" width="13" height="13" viewBox="0 0 13 13"><circle cx="6.500" cy="6.500" r="6.550" fill="#07934f"/><path d="M3.100 6.600l2.300 2.200 4.300-4.400" fill="none" stroke="#e8f4ec" stroke-width="1.600"/></svg>
<div class="a" style="left:322.5px;top:430.2px;width:275px;height:47.5px;background:#2a2a2a;border-radius:4px;"></div>
<div class="a t" style="top:447.9px;font-size:11px;line-height:15px;color:#cacaca;font-weight:700;letter-spacing:0.866px;left:334px;">PARAMETERS</div>
<svg class="a" style="left:571.7px;top:447.7px;overflow:visible;" width="13" height="13" viewBox="0 0 13 13"><circle cx="6.500" cy="6.500" r="6.550" fill="#07934f"/><path d="M3.100 6.600l2.300 2.200 4.300-4.400" fill="none" stroke="#e8f4ec" stroke-width="1.600"/></svg>
<div class="a" style="left:322.5px;top:482.1px;width:275px;height:47.5px;background:#2a2a2a;border-radius:4px;"></div>
<div class="a t" style="top:499.8px;font-size:11px;line-height:15px;color:#cacaca;font-weight:700;letter-spacing:1.285px;left:334px;">CONFIGURATION</div>
<svg class="a" style="left:571.7px;top:499.6px;overflow:visible;" width="13" height="13" viewBox="0 0 13 13"><circle cx="6.500" cy="6.500" r="6.550" fill="#07934f"/><path d="M3.100 6.600l2.300 2.200 4.300-4.400" fill="none" stroke="#e8f4ec" stroke-width="1.600"/></svg>
<div class="a" style="left:322.5px;top:534.0px;width:275px;height:47.5px;background:#2a2a2a;border-radius:4px;"></div>
<div class="a t" style="top:551.7px;font-size:11px;line-height:15px;color:#cacaca;font-weight:700;letter-spacing:1.311px;left:334px;">INPUTS/OUTPUTS</div>
<svg class="a" style="left:571.7px;top:551.5px;overflow:visible;" width="13" height="13" viewBox="0 0 13 13"><circle cx="6.500" cy="6.500" r="6.550" fill="#07934f"/><path d="M3.100 6.600l2.300 2.200 4.300-4.400" fill="none" stroke="#e8f4ec" stroke-width="1.600"/></svg>
<svg class="a" style="left:543.9px;top:551.2px;" width="16" height="13" viewBox="0 0 16 13"><path d="M7.550 1.400l6 10.200H1.550z" fill="#e6ae3c" stroke="#e6ae3c" stroke-width="0.900" stroke-linejoin="round"/><path d="M7.550 4.800v3.600M7.550 9.500v1.100" stroke="#4a3c1c" stroke-width="1.200"/></svg>
<div class="a" style="left:322.5px;top:585.9px;width:275px;height:47.5px;background:#3d3d3d;border-radius:4px;"></div>
<div class="a t" style="top:603.6px;font-size:11px;line-height:15px;color:#cacaca;font-weight:700;letter-spacing:1.066px;left:334px;">DEPLOYMENT</div>
<svg class="a" style="left:571.7px;top:603.4px;overflow:visible;" width="13" height="13" viewBox="0 0 13 13"><circle cx="6.500" cy="6.500" r="6.550" fill="#07934f"/><path d="M3.100 6.600l2.300 2.200 4.300-4.400" fill="none" stroke="#e8f4ec" stroke-width="1.600"/></svg>
<div class="a" style="left:322.5px;top:637.8px;width:275px;height:47.5px;background:#2a2a2a;border-radius:4px;"></div>
<div class="a t" style="top:655.5px;font-size:11px;line-height:15px;color:#cacaca;font-weight:700;letter-spacing:0.931px;left:334px;">ASSETS PER WORKLOAD</div>
<svg class="a" style="left:571.7px;top:655.3px;overflow:visible;" width="13" height="13" viewBox="0 0 13 13"><circle cx="6.500" cy="6.500" r="6.550" fill="#07934f"/><path d="M3.100 6.600l2.300 2.200 4.300-4.400" fill="none" stroke="#e8f4ec" stroke-width="1.600"/></svg>
<div class="a t" style="top:423.5px;font-size:11px;line-height:15px;color:#c9c9c9;letter-spacing:0.922px;left:636px;-webkit-text-stroke:0.250px #c9c9c9;">TYPE</div>
<div class="a" style="left:632px;top:443.3px;width:188px;height:34.5px;background:#2a2a2a;border-radius:4px;"></div>
<div class="a" style="left:827.7px;top:443.3px;width:188.8px;height:34.5px;background:#262626;border-radius:4px;box-shadow:inset 0 0 0 1.600px #ececec;"></div>
<svg class="a" style="left:647.1px;top:451.8px;" width="17.8" height="17.8" viewBox="0 0 17.8 17.8"><circle cx="8.9" cy="8.9" r="7.300000000000001" fill="none" stroke="#f2f2f2" stroke-width="1.400"/></svg>
<svg class="a" style="left:843.1px;top:451.8px;" width="17.8" height="17.8" viewBox="0 0 17.8 17.8"><circle cx="8.9" cy="8.9" r="7.300000000000001" fill="none" stroke="#f2f2f2" stroke-width="1.400"/><circle cx="8.9" cy="8.9" r="4.6000000000000005" fill="#fff"/></svg>
<div class="a t" style="top:454.5px;font-size:11px;line-height:15px;color:#e6e6e6;font-weight:700;letter-spacing:-0.170px;left:671.5px;">Standard</div>
<div class="a t" style="top:454.5px;font-size:11px;line-height:15px;color:#e6e6e6;font-weight:700;letter-spacing:-0.138px;left:867.3px;">Staged</div>
<div class="a t" style="top:501.6px;font-size:11px;line-height:15px;color:#c9c9c9;letter-spacing:1.295px;left:636px;-webkit-text-stroke:0.250px #c9c9c9;">STAGING MODE</div>
<div class="a" style="left:632px;top:521px;width:384.8px;height:96px;background:#121212;border-radius:3px;box-shadow:inset 0 0 0 1.500px #f2f2f2;"></div>
<svg class="a" style="left:647.1px;top:560.1px;" width="17.8" height="17.8" viewBox="0 0 17.8 17.8"><circle cx="8.9" cy="8.9" r="7.300000000000001" fill="none" stroke="#f2f2f2" stroke-width="1.400"/><circle cx="8.9" cy="8.9" r="4.6000000000000005" fill="#fff"/></svg>
<div class="a t" style="top:539.9px;font-size:14.5px;line-height:20px;color:#ffffff;font-weight:700;letter-spacing:-0.028px;left:679px;">Stage Only</div>
<div class="a t" style="top:562.1px;font-size:13px;line-height:18px;color:#c4c4c4;letter-spacing:0.188px;left:679px;">The cloud notifies the edge of a workload, downloads</div>
<div class="a t" style="top:582.3px;font-size:13px;line-height:18px;color:#c4c4c4;letter-spacing:0.143px;left:679px;">it, but requires human intervention for application.</div>
<div class="a" style="left:632px;top:625.3px;width:384.8px;height:115.5px;background:#131313;border:1px solid #2b2b2b;border-radius:3px;"></div>
<svg class="a" style="left:647.1px;top:674.4px;" width="17.8" height="17.8" viewBox="0 0 17.8 17.8"><circle cx="8.9" cy="8.9" r="7.300000000000001" fill="none" stroke="#f2f2f2" stroke-width="1.400"/></svg>
<div class="a t" style="top:642.7px;font-size:14.5px;line-height:20px;color:#ffffff;font-weight:700;letter-spacing:-0.068px;left:679px;">Instant Apply</div>
<div class="a t" style="top:665.8px;font-size:13px;line-height:18px;color:#c4c4c4;letter-spacing:0.157px;left:679px;">The cloud alerts the edge of a workload, downloads,</div>
<div class="a t" style="top:685.9px;font-size:13px;line-height:18px;color:#c4c4c4;letter-spacing:0.121px;left:679px;">and automatically applies it, no human intervention</div>
<div class="a t" style="top:706px;font-size:13px;line-height:18px;color:#c4c4c4;letter-spacing:0.250px;left:679px;">needed.</div>
<div class="a" style="left:609px;top:771px;width:662px;height:1px;background:#222;"></div>
<div class="a" style="left:632px;top:781px;width:15.5px;height:15.5px;border:2px solid #f0f0f0;border-radius:2.5px;"></div>
<div class="a t" style="top:783.1px;font-size:11px;line-height:15px;color:#cfcfcf;letter-spacing:0.169px;left:651.3px;">Set this Deployment Type as default for all future deployments.</div>
<div class="a t" style="top:822.4px;font-size:11.2px;line-height:16px;color:#f0f0f0;font-weight:700;letter-spacing:-0.467px;left:327px;">Progress:</div>
<div class="a t" style="top:822.4px;font-size:11.2px;line-height:16px;color:#dcdcdc;left:379px;">3 / 3 Steps</div>
<div class="a" style="left:333px;top:848.4px;width:175px;height:2px;background:#10a053;"></div>
<svg class="a" style="left:326.5px;top:842.4px;" width="14" height="14" viewBox="0 0 14 14"><circle cx="7" cy="7" r="7" fill="#10a053"/><path d="M4 7.200l2.100 2 3.800-3.900" fill="none" stroke="#d4ecdc" stroke-width="1.400"/></svg>
<svg class="a" style="left:414px;top:842.4px;" width="14" height="14" viewBox="0 0 14 14"><circle cx="7" cy="7" r="7" fill="#10a053"/><path d="M4 7.200l2.100 2 3.800-3.900" fill="none" stroke="#d4ecdc" stroke-width="1.400"/></svg>
<svg class="a" style="left:501px;top:842.4px;" width="14" height="14" viewBox="0 0 14 14"><circle cx="7" cy="7" r="5.800" fill="#e2e2e2" stroke="#10a053" stroke-width="2"/></svg>
<div class="a t" style="top:828.1px;font-size:13px;line-height:18px;color:#f4f4f4;font-weight:700;letter-spacing:-0.228px;left:969px;width:150px;text-align:center;text-indent:-0.228px;">Cancel</div>
<div class="a" style="left:1093px;top:820.3px;width:84.5px;height:35.2px;background:#1d1d1d;border-radius:4.5px;box-shadow:inset 0 0 0 1.500px #e6e6e6;"></div>
<div class="a t" style="top:828.1px;font-size:13px;line-height:18px;color:#f4f4f4;font-weight:700;letter-spacing:-0.417px;left:1060.2px;width:150px;text-align:center;text-indent:-0.417px;">Previous</div>
<div class="a" style="left:1189px;top:820.3px;width:67.5px;height:35.2px;background:#0557c9;border-radius:4px;"></div>
<div class="a t" style="top:828.1px;font-size:13px;line-height:18px;color:#ffffff;font-weight:700;letter-spacing:-0.227px;left:1147.5px;width:150px;text-align:center;text-indent:-0.227px;">Stage</div>
</body></html>
